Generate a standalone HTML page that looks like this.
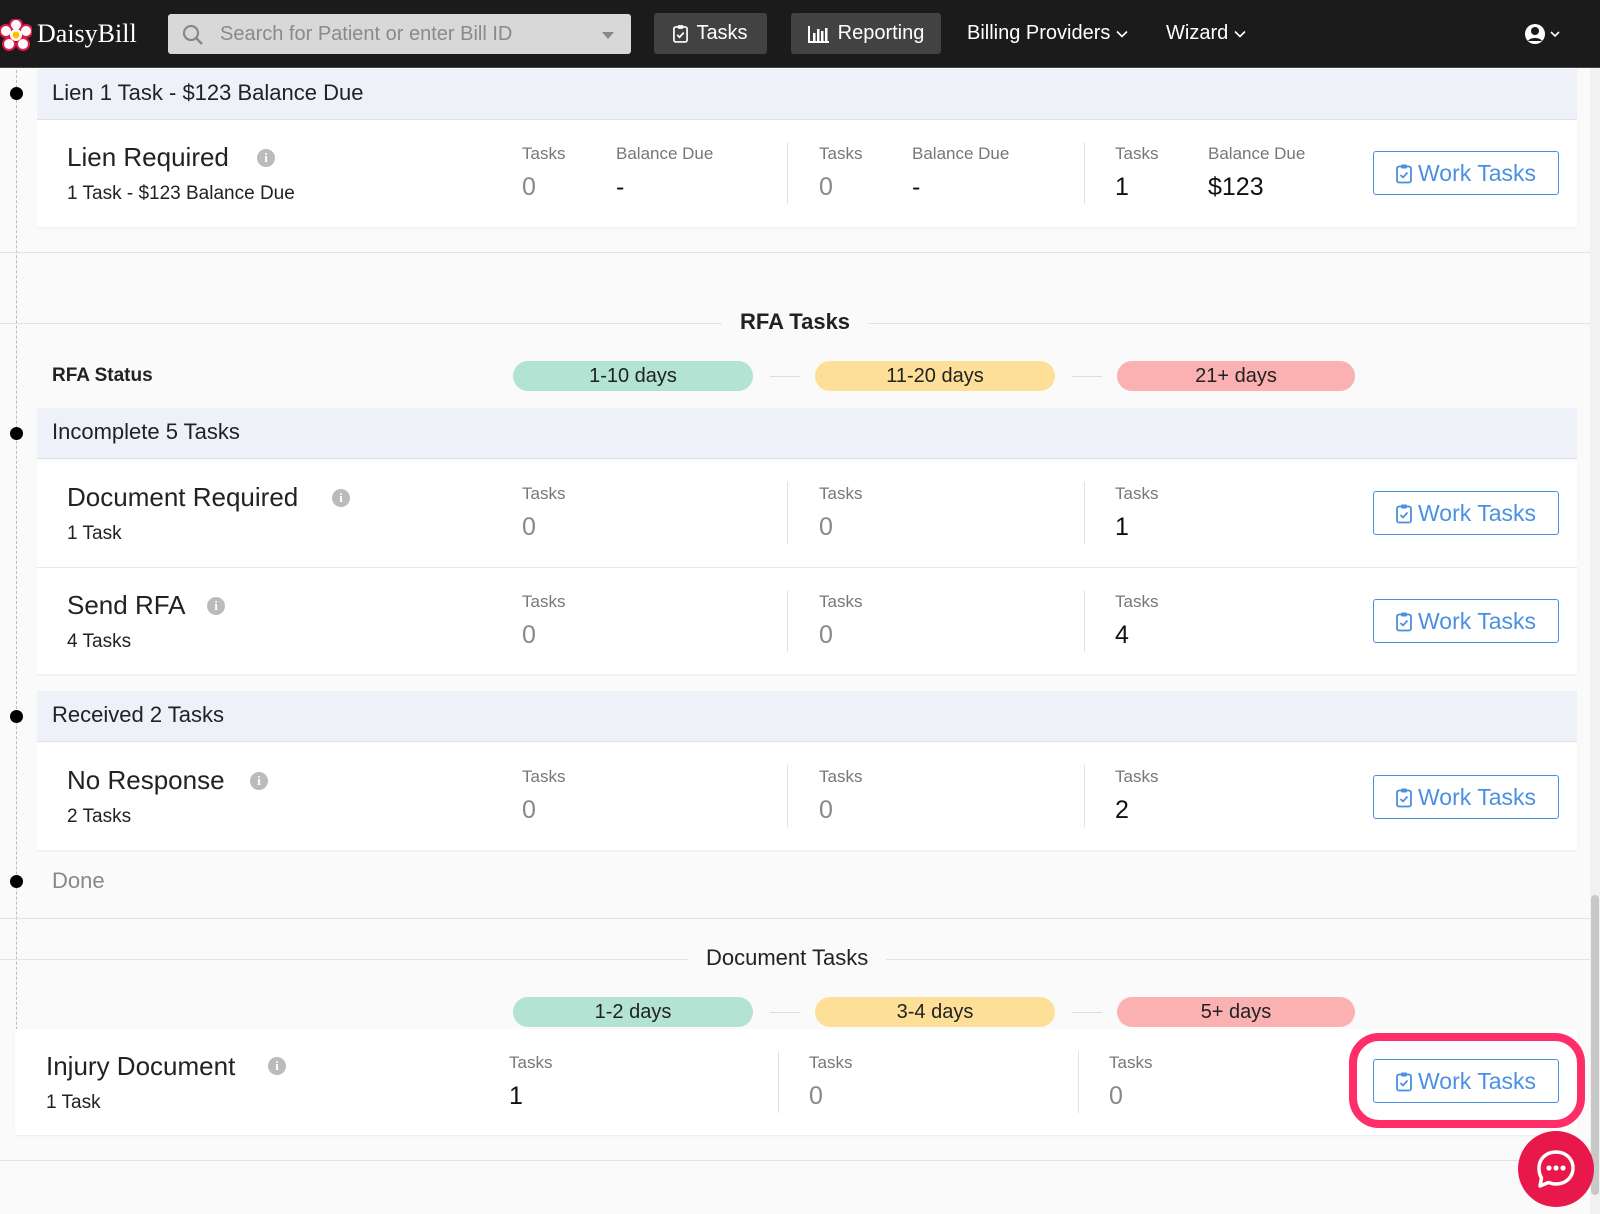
<!DOCTYPE html>
<html><head><meta charset="utf-8"><style>
*{box-sizing:border-box;margin:0;padding:0}
body{width:1600px;height:1214px;background:#fafafa;font-family:"Liberation Sans",sans-serif;position:relative;overflow:hidden;color:#222}
.a{position:absolute}
.hdr{left:0;top:0;width:1600px;height:68px;background:#1b1b1b;border-bottom:1px solid #444}
.nav{color:#fff;font-size:20px;top:22px;display:flex;align-items:center;gap:6px}
.navbtn{background:#424242;border-radius:3px;top:13px;height:41px;color:#fff;font-size:20px;display:flex;align-items:center;justify-content:center;gap:8px}
.band{left:37px;width:1540px;height:51px;background:#eef1f8;border-bottom:1px solid #dfe3ea;font-size:22px;padding:11px 0 0 15px;color:#222}
.card{left:37px;width:1540px;background:#fff;box-shadow:0 1px 2px rgba(0,0,0,.06)}
.t{font-size:26px;color:#222}
.s{font-size:19px;color:#222}
.lab{font-size:17px;color:#777}
.val{font-size:25px;color:#888}
.val.b{color:#111}
.div{width:1px;background:#e2e2e2}
.info{width:18px;height:18px;border-radius:50%;background:#bbb;color:#fff;font-size:13px;font-weight:bold;text-align:center;line-height:18px;font-family:"Liberation Serif",serif}
.btn{width:186px;height:44px;border:1.5px solid #4a90e2;border-radius:3px;color:#4a90e2;font-size:23px;display:flex;align-items:center;justify-content:center;gap:6px;background:#fff}
.dot{left:10px;width:13px;height:13px;border-radius:50%;background:#000}
.hr{left:0;width:1590px;height:1px;background:#e3e3e3}
.pill{height:30px;border-radius:15px;font-size:20px;text-align:center;line-height:30px;color:#222}
.g{background:#b2e3d3}.y{background:#fddf98}.r{background:#fbb1b1}
.con{height:1px;background:#ddd}
.h2{font-size:22px;background:#fafafa;padding:0 18px;color:#222}
</style></head><body>
<svg width="0" height="0" style="position:absolute"><defs>
<symbol id="clip" viewBox="0 0 16 20"><rect x="1" y="3" width="14" height="16" rx="2" fill="none" stroke="currentColor" stroke-width="1.8"/><rect x="5" y="1" width="6" height="4" rx="1" fill="currentColor"/><path d="M4.5 11.5l2.5 2.5 4.5-5" fill="none" stroke="currentColor" stroke-width="1.8"/></symbol>
<symbol id="chev" viewBox="0 0 12 8"><path d="M1 1.5l5 5 5-5" fill="none" stroke="#fff" stroke-width="1.6"/></symbol>
</defs></svg>

<div class="a" style="left:1590px;top:68px;width:10px;height:1146px;background:#f1f1f1"></div>
<div class="a" style="left:1591px;top:895px;width:8px;height:300px;background:#c8c8c8;border-radius:4px"></div>

<div class="a" style="left:16px;top:70px;width:0;height:1060px;border-left:1.5px dashed #bbb"></div>

<div class="a hdr"></div>
<svg class="a" style="left:0;top:19px" width="32" height="32" viewBox="0 0 32 32"><g fill="#fff" stroke="#e8184a" stroke-width="2"><circle cx="16" cy="6" r="6"/><circle cx="26" cy="12" r="6"/><circle cx="23" cy="25" r="6"/><circle cx="9" cy="25" r="6"/><circle cx="6" cy="12" r="6"/></g><circle cx="16" cy="16" r="6" fill="#fff"/><circle cx="16" cy="16" r="3.5" fill="#f5c400"/></svg>
<div class="a" style="left:37px;top:19px;color:#fff;font-family:'Liberation Serif',serif;font-size:26px">DaisyBill</div>
<div class="a" style="left:168px;top:14px;width:463px;height:40px;background:#d8d8d8;border-radius:3px"></div>
<svg class="a" style="left:182px;top:24px" width="22" height="22" viewBox="0 0 22 22"><circle cx="9" cy="9" r="7" fill="none" stroke="#888" stroke-width="2.2"/><path d="M14 14l6 6" stroke="#888" stroke-width="2.5"/></svg>
<div class="a" style="left:220px;top:23px;font-size:20px;color:#8a8a8a">Search for Patient or enter Bill ID</div>
<div class="a" style="left:602px;top:32px;border:6px solid transparent;border-top:7px solid #888"></div>
<div class="a navbtn" style="left:654px;width:113px"><svg width="15" height="19" style="color:#fff"><use href="#clip"/></svg>Tasks</div>
<div class="a navbtn" style="left:791px;width:150px"><svg width="22" height="18" viewBox="0 0 22 18"><path d="M1 1v16h20" fill="none" stroke="#fff" stroke-width="2"/><rect x="5" y="8" width="2.5" height="8" fill="#fff"/><rect x="9" y="4" width="2.5" height="12" fill="#fff"/><rect x="13" y="6" width="2.5" height="10" fill="#fff"/><rect x="17" y="3" width="2.5" height="13" fill="#fff"/></svg>Reporting</div>
<div class="a nav" style="left:967px">Billing Providers <svg width="12" height="8"><use href="#chev"/></svg></div>
<div class="a nav" style="left:1166px">Wizard <svg width="12" height="8"><use href="#chev"/></svg></div>
<svg class="a" style="left:1524px;top:22px" width="40" height="24" viewBox="0 0 40 24"><circle cx="11" cy="12" r="10" fill="#fff"/><circle cx="11" cy="9" r="4" fill="#1b1b1b"/><path d="M4 19c2-4 12-4 14 0" fill="#1b1b1b"/><path d="M27 10l4 4 4-4" fill="none" stroke="#fff" stroke-width="1.6"/></svg>

<div class="a dot" style="top:87px"></div>
<div class="a band" style="top:69px">Lien 1 Task - $123 Balance Due</div>
<div class="a card" style="top:120px;height:107px"></div>
<div class="a t" style="left:67px;top:142px">Lien Required</div><div class="a info" style="left:257px;top:149px">i</div>
<div class="a s" style="left:67px;top:183px">1 Task - $123 Balance Due</div>
<div class="a lab" style="left:522px;top:144px">Tasks</div><div class="a val" style="left:522px;top:173px">0</div>
<div class="a lab" style="left:616px;top:144px">Balance Due</div><div class="a val b" style="left:616px;top:173px">-</div>
<div class="a div" style="left:787px;top:142px;height:62px"></div>
<div class="a lab" style="left:819px;top:144px">Tasks</div><div class="a val" style="left:819px;top:173px">0</div>
<div class="a lab" style="left:912px;top:144px">Balance Due</div><div class="a val b" style="left:912px;top:173px">-</div>
<div class="a div" style="left:1084px;top:142px;height:62px"></div>
<div class="a lab" style="left:1115px;top:144px">Tasks</div><div class="a val b" style="left:1115px;top:173px">1</div>
<div class="a lab" style="left:1208px;top:144px">Balance Due</div><div class="a val b" style="left:1208px;top:173px">$123</div>
<div class="a btn" style="left:1373px;top:151px"><svg width="16" height="21"><use href="#clip"/></svg>Work Tasks</div>

<div class="a hr" style="top:252px"></div>

<div class="a hr" style="top:323px"></div>
<div class="a h2" style="left:722px;top:309px;font-weight:bold;font-size:22px">RFA Tasks</div>
<div class="a" style="left:52px;top:365px;font-size:19px;font-weight:bold">RFA Status</div>
<div class="a pill g" style="left:513px;top:361px;width:240px">1-10 days</div>
<div class="a con" style="left:770px;top:376px;width:30px"></div>
<div class="a pill y" style="left:815px;top:361px;width:240px">11-20 days</div>
<div class="a con" style="left:1072px;top:376px;width:30px"></div>
<div class="a pill r" style="left:1117px;top:361px;width:238px">21+ days</div>

<div class="a dot" style="top:427px"></div>
<div class="a band" style="top:408px">Incomplete 5 Tasks</div>
<div class="a card" style="top:460px;height:214px"></div>
<div class="a" style="left:37px;top:567px;width:1540px;height:1px;background:#e8e8e8"></div>

<div class="a t" style="left:67px;top:482px">Document Required</div><div class="a info" style="left:332px;top:489px">i</div>
<div class="a s" style="left:67px;top:523px">1 Task</div>
<div class="a lab" style="left:522px;top:484px">Tasks</div><div class="a val" style="left:522px;top:513px">0</div>
<div class="a div" style="left:787px;top:482px;height:62px"></div>
<div class="a lab" style="left:819px;top:484px">Tasks</div><div class="a val" style="left:819px;top:513px">0</div>
<div class="a div" style="left:1084px;top:482px;height:62px"></div>
<div class="a lab" style="left:1115px;top:484px">Tasks</div><div class="a val b" style="left:1115px;top:513px">1</div>
<div class="a btn" style="left:1373px;top:491px"><svg width="16" height="21"><use href="#clip"/></svg>Work Tasks</div>

<div class="a t" style="left:67px;top:590px">Send RFA</div><div class="a info" style="left:207px;top:597px">i</div>
<div class="a s" style="left:67px;top:631px">4 Tasks</div>
<div class="a lab" style="left:522px;top:592px">Tasks</div><div class="a val" style="left:522px;top:621px">0</div>
<div class="a div" style="left:787px;top:590px;height:62px"></div>
<div class="a lab" style="left:819px;top:592px">Tasks</div><div class="a val" style="left:819px;top:621px">0</div>
<div class="a div" style="left:1084px;top:590px;height:62px"></div>
<div class="a lab" style="left:1115px;top:592px">Tasks</div><div class="a val b" style="left:1115px;top:621px">4</div>
<div class="a btn" style="left:1373px;top:599px"><svg width="16" height="21"><use href="#clip"/></svg>Work Tasks</div>

<div class="a dot" style="top:710px"></div>
<div class="a band" style="top:691px">Received 2 Tasks</div>
<div class="a card" style="top:743px;height:107px"></div>
<div class="a t" style="left:67px;top:765px">No Response</div><div class="a info" style="left:250px;top:772px">i</div>
<div class="a s" style="left:67px;top:806px">2 Tasks</div>
<div class="a lab" style="left:522px;top:767px">Tasks</div><div class="a val" style="left:522px;top:796px">0</div>
<div class="a div" style="left:787px;top:765px;height:62px"></div>
<div class="a lab" style="left:819px;top:767px">Tasks</div><div class="a val" style="left:819px;top:796px">0</div>
<div class="a div" style="left:1084px;top:765px;height:62px"></div>
<div class="a lab" style="left:1115px;top:767px">Tasks</div><div class="a val b" style="left:1115px;top:796px">2</div>
<div class="a btn" style="left:1373px;top:775px"><svg width="16" height="21"><use href="#clip"/></svg>Work Tasks</div>

<div class="a dot" style="top:875px"></div>
<div class="a" style="left:52px;top:868px;font-size:22px;color:#888">Done</div>

<div class="a hr" style="top:918px"></div>

<div class="a hr" style="top:959px"></div>
<div class="a h2" style="left:688px;top:945px">Document Tasks</div>
<div class="a pill g" style="left:513px;top:997px;width:240px">1-2 days</div>
<div class="a con" style="left:770px;top:1012px;width:30px"></div>
<div class="a pill y" style="left:815px;top:997px;width:240px">3-4 days</div>
<div class="a con" style="left:1072px;top:1012px;width:30px"></div>
<div class="a pill r" style="left:1117px;top:997px;width:238px">5+ days</div>

<div class="a card" style="left:15px;top:1029px;width:1562px;height:106px"></div>
<div class="a t" style="left:46px;top:1051px">Injury Document</div><div class="a info" style="left:268px;top:1057px">i</div>
<div class="a s" style="left:46px;top:1092px">1 Task</div>
<div class="a lab" style="left:509px;top:1053px">Tasks</div><div class="a val b" style="left:509px;top:1082px">1</div>
<div class="a div" style="left:778px;top:1051px;height:62px"></div>
<div class="a lab" style="left:809px;top:1053px">Tasks</div><div class="a val" style="left:809px;top:1082px">0</div>
<div class="a div" style="left:1078px;top:1051px;height:62px"></div>
<div class="a lab" style="left:1109px;top:1053px">Tasks</div><div class="a val" style="left:1109px;top:1082px">0</div>
<div class="a btn" style="left:1373px;top:1059px"><svg width="16" height="21"><use href="#clip"/></svg>Work Tasks</div>
<div class="a" style="left:1349px;top:1033px;width:236px;height:95px;border:8px solid #ff2d68;border-radius:30px"></div>

<div class="a hr" style="top:1160px"></div>

<div class="a" style="left:1518px;top:1131px;width:76px;height:76px;border-radius:50%;background:#e8184a"></div>
<svg class="a" style="left:1530px;top:1143px" width="52" height="52" viewBox="0 0 52 52"><path d="M26 9c10 0 17 7 17 16s-7 16-17 16c-3 0-5-.5-7.5-1.5L10 43l1.5-8C9.5 32 9 29 9 25 9 16 16 9 26 9z" fill="none" stroke="#fff" stroke-width="3.5" stroke-linejoin="round"/><circle cx="19" cy="25" r="2.6" fill="#fff"/><circle cx="26" cy="25" r="2.6" fill="#fff"/><circle cx="33" cy="25" r="2.6" fill="#fff"/></svg>
</body></html>
